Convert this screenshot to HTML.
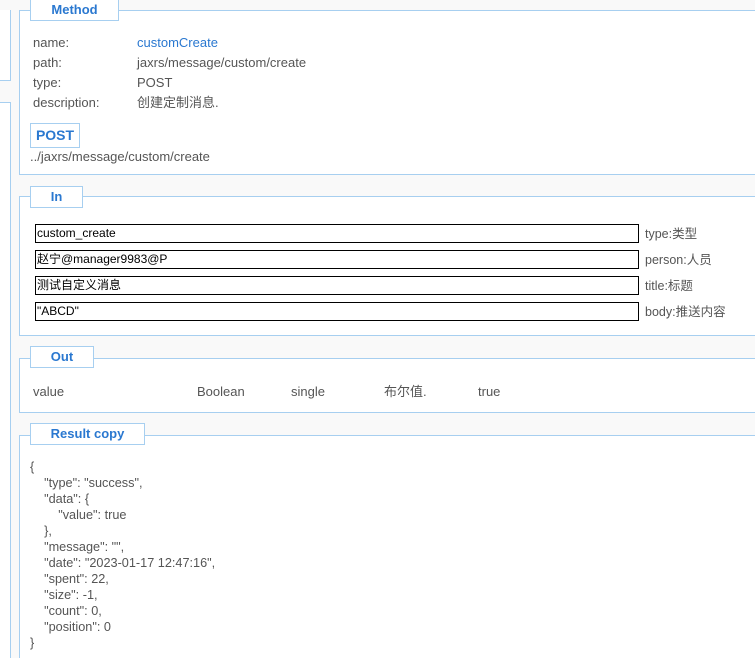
<!DOCTYPE html>
<html><head><meta charset="utf-8"><style>
*{margin:0;padding:0;box-sizing:border-box}
html,body{width:755px;height:658px;overflow:hidden}
body{background:#f9f9f9;position:relative;font-family:"Liberation Sans","Noto Sans CJK SC",sans-serif;font-size:13px;color:#555}
.a{position:absolute}
.p{position:absolute;left:19px;width:736px;background:#fff;border:1px solid #a7cff0;border-right:none}
.lg{position:absolute;left:30px;height:22px;background:#fff;border:1px solid #a7cff0;color:#2a78d0;font-weight:bold;font-size:13px;text-align:center;line-height:20px}
.t{position:absolute;white-space:nowrap;line-height:14px}
.in{position:absolute;left:35px;width:604px;height:19px;border:1px solid #000;color:#000;font-size:12px;line-height:16px;padding-left:1px;font-family:"Liberation Sans","Noto Sans CJK SC",sans-serif;white-space:nowrap}
.lb{position:absolute;left:645px;line-height:14px;white-space:nowrap;font-size:12.5px}
</style></head><body>
<div class="a" style="left:0;top:10px;width:11px;height:71px;background:#fff;border:1px solid #a7cff0;border-left:none;border-top:none"></div>
<div class="a" style="left:0;top:102px;width:11px;height:556px;background:#fff;border:1px solid #a7cff0;border-left:none;border-bottom:none"></div>

<div class="p" style="top:10px;height:165px"></div>
<div class="lg" style="top:-1px;width:89px">Method</div>
<div class="t" style="left:33px;top:36px">name:</div><div class="t" style="left:137px;top:36px;color:#2a78d0">customCreate</div>
<div class="t" style="left:33px;top:56px">path:</div><div class="t" style="left:137px;top:56px">jaxrs/message/custom/create</div>
<div class="t" style="left:33px;top:76px">type:</div><div class="t" style="left:137px;top:76px">POST</div>
<div class="t" style="left:33px;top:96px">description:</div><div class="t" style="left:137px;top:96px">创建定制消息.</div>
<div class="a" style="left:30px;top:123px;width:50px;height:25px;border:1px solid #a7cff0;color:#2a78d0;font-weight:bold;font-size:14px;line-height:23px;text-align:center">POST</div>
<div class="t" style="left:30px;top:150px">../jaxrs/message/custom/create</div>

<div class="p" style="top:196px;height:140px"></div>
<div class="lg" style="top:186px;width:53px">In</div>
<div class="in" style="top:224px">custom_create</div><div class="lb" style="top:227px">type:类型</div>
<div class="in" style="top:250px">赵宁@manager9983@P</div><div class="lb" style="top:253px">person:人员</div>
<div class="in" style="top:276px">测试自定义消息</div><div class="lb" style="top:279px">title:标题</div>
<div class="in" style="top:302px">"ABCD"</div><div class="lb" style="top:305px">body:推送内容</div>

<div class="p" style="top:358px;height:55px"></div>
<div class="lg" style="top:346px;width:64px">Out</div>
<div class="t" style="left:33px;top:385px">value</div>
<div class="t" style="left:197px;top:385px">Boolean</div>
<div class="t" style="left:291px;top:385px">single</div>
<div class="t" style="left:384px;top:385px">布尔值.</div>
<div class="t" style="left:478px;top:385px">true</div>

<div class="p" style="top:435px;height:223px;border-bottom:none"></div>
<div class="lg" style="top:423px;width:115px">Result copy</div>
<div class="t" style="left:30px;top:459px;line-height:16px;font-size:12.7px">{<br>&nbsp;&nbsp;&nbsp;&nbsp;"type": "success",<br>&nbsp;&nbsp;&nbsp;&nbsp;"data": {<br>&nbsp;&nbsp;&nbsp;&nbsp;&nbsp;&nbsp;&nbsp;&nbsp;"value": true<br>&nbsp;&nbsp;&nbsp;&nbsp;},<br>&nbsp;&nbsp;&nbsp;&nbsp;"message": "",<br>&nbsp;&nbsp;&nbsp;&nbsp;"date": "2023-01-17 12:47:16",<br>&nbsp;&nbsp;&nbsp;&nbsp;"spent": 22,<br>&nbsp;&nbsp;&nbsp;&nbsp;"size": -1,<br>&nbsp;&nbsp;&nbsp;&nbsp;"count": 0,<br>&nbsp;&nbsp;&nbsp;&nbsp;"position": 0<br>}</div>
</body></html>
